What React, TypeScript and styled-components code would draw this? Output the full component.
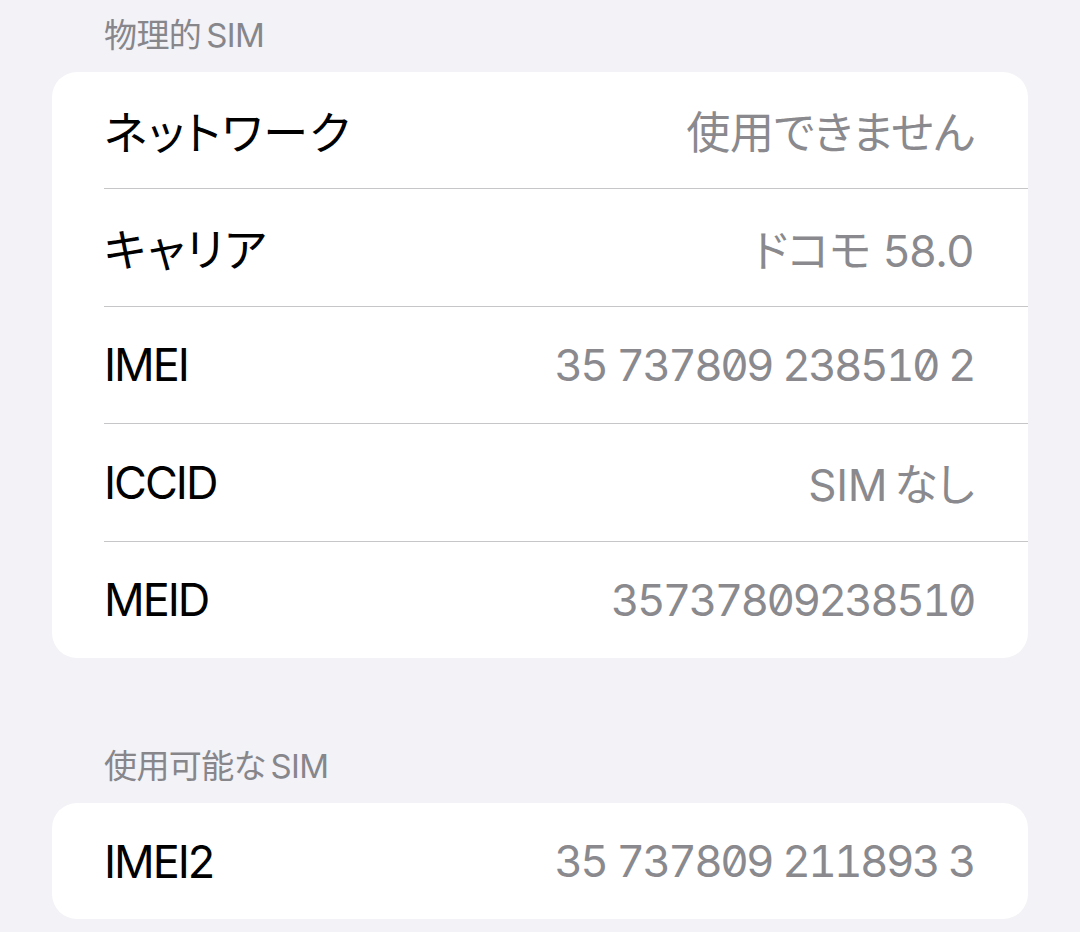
import React from "react";
import styled, { createGlobalStyle } from "styled-components";

const GlobalStyle = createGlobalStyle`
  html, body {
    margin: 0;
    padding: 0;
    background: #f2f2f7;
  }
  body {
    font-family: Inter, "Noto Sans CJK JP", sans-serif;
    -webkit-font-smoothing: antialiased;
  }
`;

const Page = styled.main`
  min-height: 932px;
  padding: 13px 52px 0;
  box-sizing: border-box;
  background: #f2f2f7;
`;

const Section = styled.section`
  & + & {
    margin-top: 86px;
  }
`;

const SectionHeader = styled.h2`
  margin: 0;
  padding: 0 0 15px 52px;
  font-size: 33px;
  line-height: 44px;
  font-weight: 400;
  color: #86868b;
  letter-spacing: -0.6px;
  font-family: Inter, "Noto Sans CJK JP", sans-serif;
  font-feature-settings: "palt" 1;
`;

// iOS puts a little air between kana/kanji and latin runs
const Gap = styled.span<{ $w: number }>`
  display: inline-block;
  width: ${(p) => p.$w}px;
`;

const Card = styled.div`
  background: #ffffff;
  border-radius: 25px;
  overflow: hidden;
`;

const Row = styled.div`
  display: flex;
  align-items: center;
  justify-content: space-between;
  height: 116.4px;
  margin-left: 52px;
  padding-right: 54px;
  border-bottom: 1px solid #c6c6c8;

  &:last-child {
    border-bottom: none;
  }
`;

const Label = styled.span<{ $cjk?: boolean }>`
  font-size: 45px;
  color: #000000;
  letter-spacing: ${(p) => (p.$cjk ? "1.6px" : "-2px")};
  font-family: Inter, "Noto Sans CJK JP", sans-serif;
  font-feature-settings: "palt" 1;
`;

const Value = styled.span<{ $mono?: boolean }>`
  font-size: 44px;
  color: #8a8a8e;
  font-family: Inter, "Noto Sans CJK JP", sans-serif;
  font-feature-settings: ${(p) => (p.$mono ? '"tnum" 1, "zero" 1' : '"palt" 1')};
  word-spacing: ${(p) => (p.$mono ? "1px" : "0")};
  letter-spacing: ${(p) => (p.$mono ? "-2.6px" : "-0.3px")};
`;

type Item = { label: string; value: React.ReactNode; mono?: boolean };

const isCjk = (s: string) => /[\u3040-\u30ff\u4e00-\u9fff]/.test(s);

const physical: Item[] = [
  { label: "ネットワーク", value: "使用できません" },
  { label: "キャリア", value: "ドコモ 58.0" },
  { label: "IMEI", value: "35 737809 238510 2", mono: true },
  {
    label: "ICCID",
    value: (
      <>
        SIM<Gap $w={7} />なし
      </>
    ),
  },
  { label: "MEID", value: "35737809238510", mono: true },
];

const available: Item[] = [
  { label: "IMEI2", value: "35 737809 211893 3", mono: true },
];

const Group = ({ title, items }: { title: React.ReactNode; items: Item[] }) => (
  <Section>
    <SectionHeader>{title}</SectionHeader>
    <Card>
      {items.map((it) => (
        <Row key={it.label}>
          <Label $cjk={isCjk(it.label)}>{it.label}</Label>
          <Value $mono={it.mono}>{it.value}</Value>
        </Row>
      ))}
    </Card>
  </Section>
);

export default function App() {
  return (
    <>
      <GlobalStyle />
      <Page>
        <Group
          title={
            <>
              物理的<Gap $w={5} />SIM
            </>
          }
          items={physical}
        />
        <Group
          title={
            <>
              使用可能な<Gap $w={5} />SIM
            </>
          }
          items={available}
        />
      </Page>
    </>
  );
}
